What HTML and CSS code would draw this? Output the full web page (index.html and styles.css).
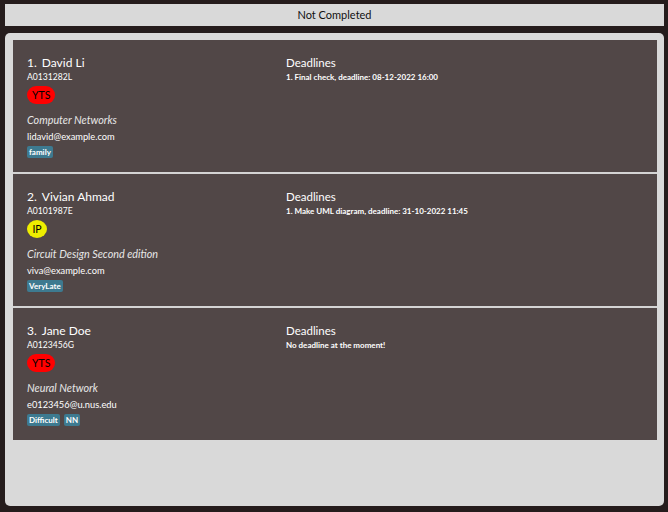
FILE: index.html
```html
<!DOCTYPE html>
<html>
<head>
<meta charset="utf-8">
<link rel="stylesheet" href="styles.css">
</head>
<body>
<div class="header">Not Completed</div>
<div class="panel">
  <div class="list">
    <div class="card">
      <div class="left">
        <div class="name"><span class="idx">1.</span><span>David Li</span></div>
        <div class="sid">A0131282L</div>
        <div class="badge red">YTS</div>
        <div class="module">Computer Networks</div>
        <div class="email">lidavid@example.com</div>
        <div class="tags"><span class="tag">family</span></div>
      </div>
      <div class="right">
        <div class="dtitle">Deadlines</div>
        <div class="ditem">1. Final check, deadline: 08-12-2022 16:00</div>
      </div>
    </div>
    <div class="card">
      <div class="left">
        <div class="name"><span class="idx">2.</span><span>Vivian Ahmad</span></div>
        <div class="sid">A0101987E</div>
        <div class="badge yellow">IP</div>
        <div class="module">Circuit Design Second edition</div>
        <div class="email">viva@example.com</div>
        <div class="tags"><span class="tag">VeryLate</span></div>
      </div>
      <div class="right">
        <div class="dtitle">Deadlines</div>
        <div class="ditem">1. Make UML diagram, deadline: 31-10-2022 11:45</div>
      </div>
    </div>
    <div class="card">
      <div class="left">
        <div class="name"><span class="idx">3.</span><span>Jane Doe</span></div>
        <div class="sid">A0123456G</div>
        <div class="badge red">YTS</div>
        <div class="module">Neural Network</div>
        <div class="email">e0123456@u.nus.edu</div>
        <div class="tags"><span class="tag">Difficult</span><span class="tag">NN</span></div>
      </div>
      <div class="right">
        <div class="dtitle">Deadlines</div>
        <div class="ditem">No deadline at the moment!</div>
      </div>
    </div>
  </div>
</div>
</body>
</html>
```
FILE: styles.css
```css
html, body {
  margin: 0;
  padding: 0;
  height: 512px;
  background: #251c1c;
  font-family: Lato, "Open Sans", sans-serif;
  overflow: hidden;
}
body {
  display: flex;
  flex-direction: column;
  padding: 4px 4px 6px 5px;
  box-sizing: border-box;
}
.header {
  height: 22px;
  background: #d9d9d9;
  color: #111;
  font-size: 11px;
  line-height: 22px;
  text-align: center;
}
.panel {
  margin-top: 7px;
  flex: 1;
  background: #d9d9d9;
  border-radius: 5px;
  padding: 7px 7px 0 8px;
}
.list {
  display: flex;
  flex-direction: column;
  gap: 2px;
  background: #d4d4d4;
}
.card {
  height: 132px;
  box-sizing: border-box;
  background: #514747;
  display: grid;
  grid-template-columns: 259px 1fr;
  padding: 15px 0 0 14px;
  color: #fff;
}
.left {
  display: flex;
  flex-direction: column;
  align-items: flex-start;
}
.name {
  font-size: 12px;
  line-height: 16px;
  display: flex;
  gap: 5px;
}
.sid {
  font-size: 8.6px;
  line-height: 13px;
}
.badge {
  margin-top: 2px;
  height: 18px;
  color: #000;
  font-size: 10.5px;
  line-height: 18px;
  text-align: center;
}
.red {
  background: #ff0000;
  border-radius: 9px;
  padding: 0 5px;
  min-width: 18px;
}
.yellow {
  background: #eeee00;
  border-radius: 50%;
  width: 20px;
}
.module {
  font-style: italic;
  font-size: 10.8px;
  line-height: 14px;
  margin-top: 9px;
  color: #e8e8e8;
}
.email {
  font-size: 9.3px;
  line-height: 14px;
  margin-top: 3px;
}
.tags {
  display: flex;
  gap: 4px;
  margin-top: 2px;
}
.tag {
  background: #3d7a90;
  color: #fff;
  font-size: 8px;
  font-weight: bold;
  line-height: 12px;
  padding: 0 2px;
  border-radius: 2px;
}
.dtitle {
  font-size: 11.5px;
  line-height: 16px;
}
.ditem {
  font-size: 8px;
  font-weight: bold;
  line-height: 12px;
}
```
